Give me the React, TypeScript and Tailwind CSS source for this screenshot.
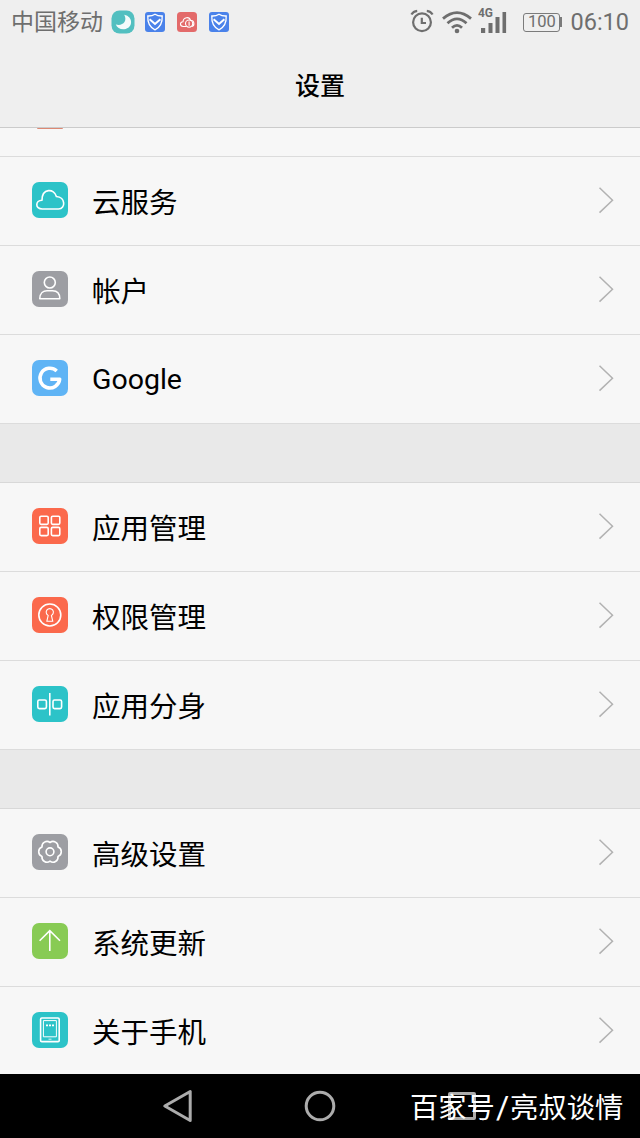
import type { ReactNode } from 'react';

type Item = { label: string; color: string; icon: ReactNode; labelClass?: string };

const cloud: Item = {
  label: '云服务',
  color: 'bg-[#2cc3c8]',
  icon: <path d="M10.3 27 C2.8 27 3.2 18.4 10 18.2 C10 6.2 22.3 6 24.4 14.5 C33.5 14.8 34 27 26.5 27 Z" />,
};

const account: Item = {
  label: '帐户',
  color: 'bg-[#9d9ea3]',
  icon: (
    <>
      <circle cx="17.8" cy="11.5" r="5.5" />
      <path d="M7.8 27.8 C7.8 22 11.5 19.8 15 19.8 H20.5 C24.5 19.8 27.8 22 27.8 27.8 Z" />
    </>
  ),
};

const google: Item = {
  label: 'Google',
  color: 'bg-[#5fb4f5]',
  labelClass: 'pb-[3px]',
  icon: <path d="M24.7 11 A9.9 9.9 0 1 0 27.7 19.3 H18.3" strokeWidth="3.5" />,
};

const apps: Item = {
  label: '应用管理',
  color: 'bg-[#fb694c]',
  icon: (
    <>
      <rect x="7.8" y="8.2" width="8.4" height="8.2" rx="1.3" />
      <rect x="19.4" y="8.2" width="8.4" height="8.2" rx="1.3" />
      <rect x="7.8" y="19.4" width="8.4" height="8.2" rx="1.3" />
      <rect x="19.4" y="19.4" width="8.4" height="8.2" rx="1.3" />
    </>
  ),
};

const permissions: Item = {
  label: '权限管理',
  color: 'bg-[#fb694c]',
  icon: (
    <>
      <circle cx="17.8" cy="18" r="11" />
      <path d="M16.2 18.4 A3.6 3.6 0 1 1 19.4 18.4 L20.8 24.3 H14.8 Z" strokeWidth="1.1" />
    </>
  ),
};

const twin: Item = {
  label: '应用分身',
  color: 'bg-[#2cc3c8]',
  icon: (
    <>
      <rect x="5.8" y="14" width="8.6" height="8.6" rx="1.5" />
      <rect x="21" y="14" width="8.6" height="8.6" rx="1.5" />
      <path d="M17.8 7 V29.5" />
    </>
  ),
};

const advanced: Item = {
  label: '高级设置',
  color: 'bg-[#9d9ea3]',
  icon: (
    <>
      <circle cx="18" cy="17.8" r="3.9" />
      <path d="M18 8.5 A5 5 0 0 1 26 13.1 A5 5 0 0 1 26 22.5 A5 5 0 0 1 18 27.1 A5 5 0 0 1 10 22.5 A5 5 0 0 1 10 13.1 A5 5 0 0 1 18 8.5 Z" />
    </>
  ),
};

const update: Item = {
  label: '系统更新',
  color: 'bg-[#88cb54]',
  icon: <path d="M17.8 28 V7.8 M7.6 17.8 L17.8 7.6 L28 17.8" strokeLinejoin="miter" />,
};

const about: Item = {
  label: '关于手机',
  color: 'bg-[#2cc3c8]',
  icon: (
    <>
      <rect x="8.6" y="6" width="18.6" height="23.6" rx="1.2" />
      <rect x="11.4" y="8.6" width="13" height="16.2" strokeWidth="1" />
      <path d="M14 13.4 H22" strokeWidth="1.8" strokeDasharray="2 1" strokeLinecap="butt" />
      <path d="M16.5 27.2 H19.5" strokeWidth="0.8" />
    </>
  ),
};

function Row({ item }: { item: Item }) {
  return (
    <div className="flex h-[89px] shrink-0 items-center border-b border-[#dcdcdc] pr-[25px] pl-8">
      <div className={`mb-0.5 h-9 w-9 rounded-[7px] ${item.color}`}>
        <svg
          viewBox="0 0 36 36"
          className="h-9 w-9"
          fill="none"
          stroke="white"
          strokeWidth="1.6"
          strokeLinejoin="round"
        >
          {item.icon}
        </svg>
      </div>
      <span className={`mt-[5px] ml-6 flex-1 text-[28.5px] leading-10 text-black ${item.labelClass ?? ''}`}>
        {item.label}
      </span>
      <svg viewBox="0 0 17 28" className="mb-0.5 h-7 w-[17px]" fill="none" stroke="#b2b2b2" strokeWidth="1.5">
        <path d="M1.5 1.8 L14.5 14.2 L1.5 26.6" />
      </svg>
    </div>
  );
}

function ShieldBadge() {
  return (
    <svg viewBox="0 0 20 20" className="h-5 w-5" fill="none" stroke="white" strokeWidth="1.3">
      <rect width="20" height="20" rx="3" fill="#4a82ea" stroke="none" />
      <path d="M10 2.2 Q13 4.2 17.2 4 Q17.8 14 10 17.8 Q2.2 14 2.8 4 Q7 4.2 10 2.2 Z" />
      <path d="M4.6 7.2 L10 12 L15.4 7.2" strokeWidth="2" />
    </svg>
  );
}

function StatusBar() {
  return (
    <div className="flex h-11 items-center justify-between pr-[11px] pl-[11px] text-[#6e6e6e]">
      <div className="flex items-center">
        <span className="pt-px text-[23px] leading-8">中国移动</span>
        <svg viewBox="0 0 24 24" className="ml-2 h-6 w-6">
          <rect x="0.5" y="0.5" width="23" height="23" rx="8" fill="#52bfc0" />
          <path d="M13.2 4.8 C22.5 6.5 22.4 18.4 13.2 19.2 C9.2 19.5 6 17.6 4.8 14.4 C11 16.5 17 11.5 13.2 4.8 Z" fill="#f4fbfb" />
        </svg>
        <div className="ml-2.5 flex gap-3">
          <ShieldBadge />
          <svg viewBox="0 0 20 20" className="h-5 w-5" fill="none" stroke="white" strokeWidth="1.1">
            <rect width="20" height="20" rx="3.5" fill="#e36a6a" stroke="none" />
            <path d="M9.5 14.5 H6.2 C2.5 14.3 2.7 9.8 6 9.8 C6.3 4.8 12.5 4.4 13.4 8.2 C17.5 8.2 18 13.5 14.8 14.5" />
            <circle cx="12.1" cy="11.6" r="3.6" />
            <path d="M12.1 9.6 V13.8" />
          </svg>
          <ShieldBadge />
        </div>
      </div>
      <div className="flex items-center font-['Roboto',sans-serif]">
        <svg viewBox="0 0 24 24" className="mb-0.5 h-6 w-6" fill="none" stroke="currentColor" strokeWidth="2.2">
          <circle cx="12" cy="13.3" r="8.9" />
          <path d="M1.4 5.6 Q3.2 2.2 7.2 1.8 M22.6 5.6 Q20.8 2.2 16.8 1.8" />
          <path d="M11.8 8.7 V14 H16" />
        </svg>
        <svg viewBox="0 0 30 24" className="mb-px ml-2 h-6 w-[30px]" fill="none" stroke="currentColor" strokeWidth="2.8">
          <path d="M1 8.6 Q15 -3.4 29 8.6" />
          <path d="M5.5 13.2 Q15 4.6 24.5 13.2" />
          <path d="M10 17.7 Q15 13 20 17.7" />
          <circle cx="15" cy="21" r="2.3" fill="currentColor" stroke="none" />
        </svg>
        <svg viewBox="0 0 32 28" className="mb-[7px] ml-1.5 h-7 w-8" fill="currentColor">
          <text x="0" y="12" fontSize="12.5" fontWeight="700" textLength="15" lengthAdjust="spacingAndGlyphs">4G</text>
          <rect x="3" y="23" width="4.2" height="5" />
          <rect x="10.5" y="18" width="4" height="10" />
          <rect x="17.5" y="12" width="4" height="16" />
          <rect x="24.5" y="7" width="3.6" height="21" />
        </svg>
        <div className="ml-[13px] flex h-[19px] w-[37px] items-center justify-center rounded-[3px] border-[1.5px] border-[#7b7b7b] pt-px text-[16.5px] leading-none">
          100
        </div>
        <div className="h-2.5 w-0.5 bg-[#7b7b7b]" />
        <span className="ml-2 text-[23.5px] leading-8">06:10</span>
      </div>
    </div>
  );
}

export default function App() {
  return (
    <div className="flex h-[1138px] w-[640px] flex-col overflow-hidden bg-[#f7f7f7] font-['Roboto','Noto_Sans_CJK_SC',sans-serif]">
      <header className="h-32 shrink-0 border-b border-[#cbcbcb] bg-[#efefef]">
        <StatusBar />
        <h1 className="pt-[25px] text-center text-[25px] leading-9 font-medium text-black">设置</h1>
      </header>

      <main className="flex h-[946px] shrink-0 flex-col overflow-hidden">
        {/* bottom edge of the row scrolled under the header */}
        <div className="h-[29px] shrink-0 border-b border-[#dcdcdc] pl-[37px]">
          <div className="h-px w-[26px] rounded-b-full bg-[#dd8873]" />
        </div>
        <Row item={cloud} />
        <Row item={account} />
        <Row item={google} />
        <div className="h-[59px] shrink-0 border-b border-[#d8d8d8] bg-[#e9e9e9]" />
        <Row item={apps} />
        <Row item={permissions} />
        <Row item={twin} />
        <div className="h-[59px] shrink-0 border-b border-[#d8d8d8] bg-[#e9e9e9]" />
        <Row item={advanced} />
        <Row item={update} />
        <Row item={about} />
      </main>

      <nav className="relative flex h-16 shrink-0 items-center bg-black pl-[162px]">
        <svg viewBox="0 0 32 34" className="h-[34px] w-8" fill="none" stroke="#acacac" strokeWidth="3" strokeLinejoin="round">
          <path d="M2.8 17 L28.2 2.5 V31.5 Z" />
        </svg>
        <svg viewBox="0 0 32 32" className="ml-[110px] h-8 w-8" fill="none" stroke="#acacac" strokeWidth="3">
          <circle cx="16" cy="16" r="13.8" />
        </svg>
        <div className="ml-[112px] h-7 w-7 rounded-xs border-3 border-[#acacac]" />
        <span className="absolute top-[13px] left-[410px] text-[28.3px] leading-10 whitespace-nowrap text-white">
          百家号<span className="mx-px text-[32px]">/</span>亮叔谈情
        </span>
      </nav>
    </div>
  );
}
